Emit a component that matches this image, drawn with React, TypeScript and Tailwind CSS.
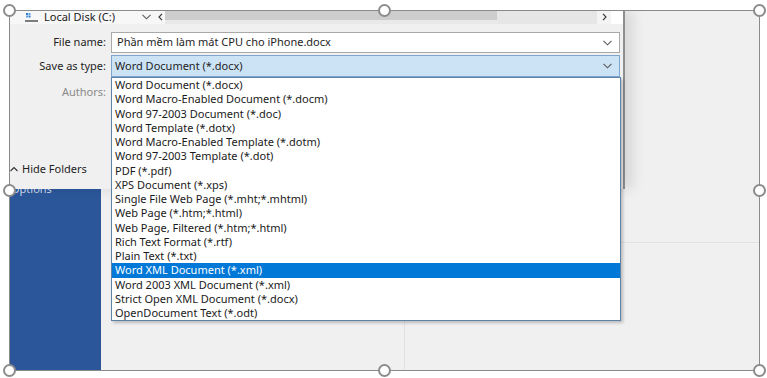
const saveTypes = [
  'Word Document (*.docx)',
  'Word Macro-Enabled Document (*.docm)',
  'Word 97-2003 Document (*.doc)',
  'Word Template (*.dotx)',
  'Word Macro-Enabled Template (*.dotm)',
  'Word 97-2003 Template (*.dot)',
  'PDF (*.pdf)',
  'XPS Document (*.xps)',
  'Single File Web Page (*.mht;*.mhtml)',
  'Web Page (*.htm;*.html)',
  'Web Page, Filtered (*.htm;*.html)',
  'Rich Text Format (*.rtf)',
  'Plain Text (*.txt)',
  'Word XML Document (*.xml)',
  'Word 2003 XML Document (*.xml)',
  'Strict Open XML Document (*.docx)',
  'OpenDocument Text (*.odt)',
]

const selected = 'Word XML Document (*.xml)'

const ChevronDown = () => (
  <svg width="9" height="6" viewBox="0 0 9 6" className="shrink-0">
    <path d="M0.5 0.8 L4.5 4.8 L8.5 0.8" fill="none" stroke="#5a5a5a" strokeWidth="1.1" />
  </svg>
)

const ChevronSide = ({ right }: { right?: boolean }) => (
  <svg width="5" height="8" viewBox="0 0 5 8" className="shrink-0">
    <path
      d={right ? 'M1 0.8 L4 4 L1 7.2' : 'M4 0.8 L1 4 L4 7.2'}
      fill="none"
      stroke="#3a3a3a"
      strokeWidth="1.2"
    />
  </svg>
)

const DriveIcon = () => (
  <svg width="13" height="9" viewBox="0 0 13 9" className="shrink-0">
    <rect x="1" y="0" width="2" height="2" fill="#2f7bd1" />
    <rect x="3.5" y="0" width="2" height="2" fill="#5aa0e8" />
    <rect x="1" y="2.5" width="2" height="2" fill="#5aa0e8" />
    <rect x="3.5" y="2.5" width="2" height="2" fill="#2f7bd1" />
    <rect x="0" y="7" width="13" height="2" fill="#7c7c7c" />
  </svg>
)

const Handle = ({ className }: { className: string }) => (
  <div className={`absolute w-[13px] h-[13px] rounded-full bg-white border-2 border-[#8c8c8c] ${className}`} />
)

function SaveDialog() {
  return (
    <div className="absolute left-0 top-0 w-[616px] h-[179px] flex flex-col bg-[#f0f0f0] border-r-2 border-[#8e8e8e] shadow-[8px_0_12px_rgba(0,0,0,0.10)] pb-[12px]">
      {/* tree row + horizontal scrollbar */}
      <div className="flex h-[14px] text-[11px] leading-[14px] text-[#1a1a1a]">
        <div className="w-[128px] flex items-center pl-[16px] gap-[6px] bg-[#f7f7f7]">
          <DriveIcon />
          <span className="whitespace-nowrap">Local Disk (C:)</span>
        </div>
        <div className="w-[18px] flex items-center justify-center bg-[#f7f7f7]">
          <ChevronDown />
        </div>
        <div className="w-[10px] flex items-center justify-center bg-[#f7f7f7]">
          <ChevronSide />
        </div>
        <div className="w-[332px] flex flex-col">
          <div className="h-[10px] bg-[#cdcdcd]" />
          <div className="flex-1 bg-[#e9e9e9]" />
        </div>
        <div className="w-[100px] bg-[#e6e6e6]" />
        <div className="w-[14px] flex items-center justify-center bg-[#f4f4f4]">
          <ChevronSide right />
        </div>
        <div className="flex-1 bg-white" />
      </div>

      {/* file name */}
      <div className="flex items-center mt-[8px] h-[21px] text-[11px] text-[#1e1e1e]">
        <div className="w-[97px] text-right">File name:</div>
        <div className="ml-[5px] w-[509px] h-full flex items-center bg-white border border-[#a9a9a9] pl-[5px] pr-[7px]">
          <span className="flex-1 whitespace-nowrap">Phần mềm làm mát CPU cho iPhone.docx</span>
          <ChevronDown />
        </div>
      </div>

      {/* save as type */}
      <div className="flex items-center mt-[2px] h-[22px] text-[11px] text-[#1e1e1e]">
        <div className="w-[97px] text-right">Save as type:</div>
        <div className="ml-[5px] w-[509px] h-full flex items-center bg-[#cce3f6] border border-[#7ea6cc] pl-[3px] pr-[7px]">
          <span className="flex-1 whitespace-nowrap">Word Document (*.docx)</span>
          <ChevronDown />
        </div>
      </div>

      {/* authors */}
      <div className="flex items-center mt-[8px] h-[14px] text-[11px] text-[#8a8a8a]">
        <div className="w-[97px] text-right">Authors:</div>
      </div>

      {/* hide folders */}
      <div className="mt-auto flex items-center h-[16px] text-[11px] text-[#1e1e1e]">
        <svg width="8" height="6" viewBox="0 0 8 6" className="ml-[1px]">
          <path d="M0.5 5 L4 1.5 L7.5 5" fill="none" stroke="#333" strokeWidth="1.1" />
        </svg>
        <span className="ml-[4px]">Hide Folders</span>
      </div>
    </div>
  )
}

function TypeList() {
  return (
    <div className="absolute left-[102px] top-[67px] w-[510px] bg-white border border-[#5f83a8] shadow-[2px_2px_3px_rgba(0,0,0,0.22)] text-[11px] text-[#1a1a1a]">
      {saveTypes.map(t => (
        <div
          key={t}
          className={`h-[14.25px] leading-[14.25px] pl-[3px] whitespace-nowrap ${t === selected ? 'bg-[#0078d7] text-white' : ''}`}
        >
          {t}
        </div>
      ))}
    </div>
  )
}

export default function App() {
  return (
    <div className="relative w-[767px] h-[378px] bg-white overflow-hidden font-['Noto_Sans',sans-serif]">
      {/* picture content */}
      <div className="absolute left-[9px] top-[10px] w-[751px] h-[361px] overflow-hidden flex">
        <div className="w-[92px] h-full bg-[#2b579a] overflow-hidden pt-[172px] pl-[2px]">
          <div className="text-[11px] leading-[14px] text-[#c9d6ea]">Options</div>
        </div>
        <div className="flex-1 flex flex-col bg-[#f0f0f0]">
          <div className="h-[232px]" />
          <div className="flex flex-1">
            <div className="w-[303px]" />
            <div className="flex-1 border-l border-t border-[#e1e1e1]" />
          </div>
        </div>
        <SaveDialog />
        <TypeList />
      </div>

      {/* selection frame */}
      <div className="absolute left-[9px] top-[10px] w-[751px] h-[361px] border border-[#8a8a8a] pointer-events-none" />
      <Handle className="left-[3px] top-[4px]" />
      <Handle className="left-[378px] top-[4px]" />
      <Handle className="left-[753px] top-[4px]" />
      <Handle className="left-[3px] top-[184px]" />
      <Handle className="left-[753px] top-[184px]" />
      <Handle className="left-[3px] top-[364px]" />
      <Handle className="left-[378px] top-[364px]" />
      <Handle className="left-[753px] top-[364px]" />
    </div>
  )
}
